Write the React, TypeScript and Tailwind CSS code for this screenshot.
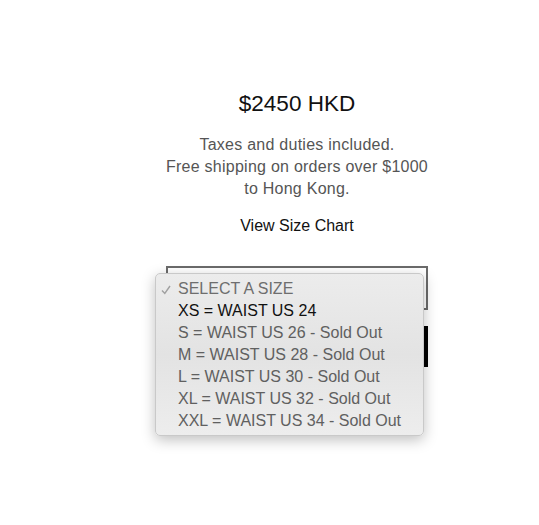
const sizes = [
  { label: "XS = WAIST US 24", soldOut: false },
  { label: "S = WAIST US 26 - Sold Out", soldOut: true },
  { label: "M = WAIST US 28 - Sold Out", soldOut: true },
  { label: "L = WAIST US 30 - Sold Out", soldOut: true },
  { label: "XL = WAIST US 32 - Sold Out", soldOut: true },
  { label: "XXL = WAIST US 34 - Sold Out", soldOut: true },
];

export default function App() {
  return (
    <div
      className="w-[539px] h-[525px] bg-white"
      style={{ fontFamily: '"Liberation Sans", Arial, sans-serif' }}
    >
      <div className="w-[262px] ml-[166px] pt-[90px] flex flex-col items-center text-center">
        {/* PRICE */}
        <p className="text-[22.5px] leading-[27px] text-[#111]">$2450 HKD</p>

        {/* SHIPPING NOTE */}
        <p className="mt-[17px] text-[16px] leading-[22px] tracking-[0.25px] text-[#555] whitespace-nowrap">
          Taxes and duties included.
          <br />
          Free shipping on orders over $1000
          <br />
          to Hong Kong.
        </p>

        <a href="#" className="mt-[15px] text-[16px] leading-[22px] text-[#111]">
          View Size Chart
        </a>

        {/* SIZE SELECT */}
        <div className="relative mt-[29px] w-full">
          <div className="h-[44px] border-2 border-[#6b6b6b]" />
          <button className="mt-[16px] h-[41px] w-full bg-black" />

          {/* OPEN MENU */}
          <ul className="absolute left-[-11px] top-[7px] w-[269px] h-[163px] pt-[4px] rounded-[5px] border border-[#c9c9c9] bg-gradient-to-b from-[#ececec] via-[#e3e3e3] to-[#ededed] shadow-[0_4px_14px_rgba(0,0,0,0.25)] text-left text-[16px] leading-[22px]">
            <li className="relative pl-[22px] text-[#6e6e6e]">
              <svg
                className="absolute left-[5px] top-[7px]"
                width="10"
                height="10"
                viewBox="0 0 10 10"
                fill="none"
                stroke="#a0a0a0"
                strokeWidth="1.4"
              >
                <path d="M1 5.5 L3.8 8.5 L9 1" />
              </svg>
              SELECT A SIZE
            </li>
            {sizes.map((s) => (
              <li
                key={s.label}
                className={"pl-[22px] " + (s.soldOut ? "text-[#606060]" : "text-[#111]")}
              >
                {s.label}
              </li>
            ))}
          </ul>
        </div>
      </div>
    </div>
  );
}
